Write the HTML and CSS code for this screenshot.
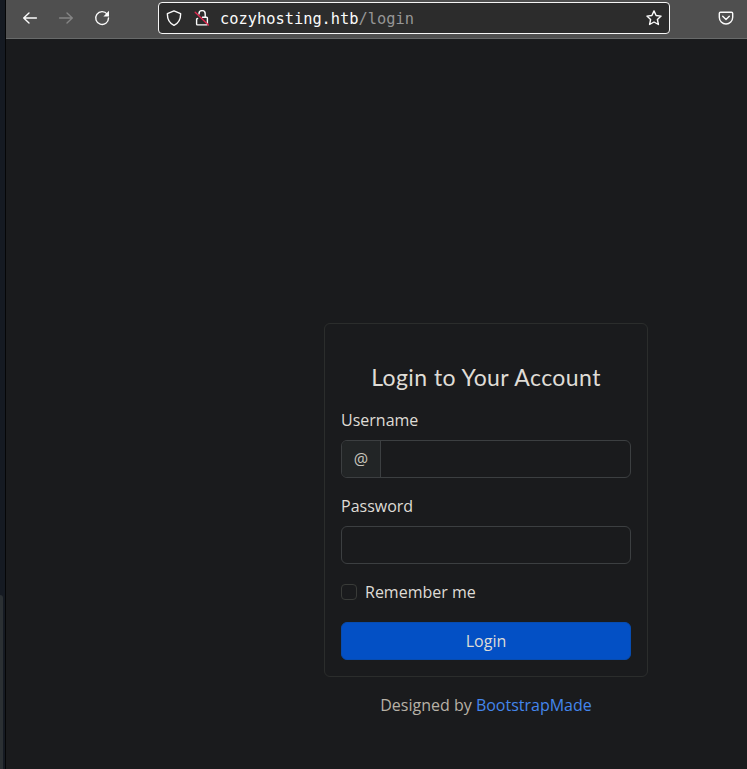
FILE: index.html
```html
<!DOCTYPE html>
<html lang="en">
<head>
<meta charset="utf-8">
<title>Login</title>
<link rel="stylesheet" href="styles.css">
</head>
<body>
<aside class="edge"><div class="edge-thumb"></div></aside>
<div class="browser">
  <header class="toolbar">
    <svg class="icon back" viewBox="0 0 16 16"><path d="M14.400 8H1.700M7 3 1.700 8 7 13"/></svg>
    <svg class="icon forward" viewBox="0 0 16 16"><path d="M1.600 8h12.700M9 3l5.300 5L9 13"/></svg>
    <svg class="icon reload" viewBox="0 0 16 16"><path d="M13.200 4.200A6.400 6.400 0 1 0 14.500 8"/><path class="solid" d="M15 .8v5.600H9.400z"/></svg>
    <div class="address">
      <svg class="icon shield" viewBox="0 0 16 16"><path d="M8 .9 14.600 3.600C14.800 9 12.700 13.200 8 15.400 3.300 13.200 1.200 9 1.400 3.600Z"/></svg>
      <svg class="icon lock" viewBox="0 0 16 16"><path d="M5 4V3.700a3.100 3.100 0 0 1 6.200 0v3.500M3.600 8.500q-1 0-1 .9v4.700q0 .8.800.8h9.200q.8 0 .8-.8V8q0-.8-.8-.8H8.500"/><path class="slash" d="M1.200 2.200 14.400 15"/></svg>
      <div class="url">cozyhosting.htb<span>/login</span></div>
      <svg class="icon star" viewBox="0 0 16 16"><path d="m8 .9 2.100 4.600 5 .6-3.700 3.400 1 5-4.400-2.500-4.400 2.500 1-5L.9 6.100l5-.6Z"/></svg>
    </div>
    <svg class="icon pocket" viewBox="0 0 16 16"><path d="M2.500 2.300h11q1.200 0 1.200 1.200V7.300a6.700 6.700 0 0 1-13.400 0V3.500q0-1.200 1.200-1.200Z"/><path d="M4.700 6.200 8 9.400l3.300-3.200"/></svg>
  </header>
  <main class="page">
    <form class="card">
      <h1>Login to Your Account</h1>
      <label for="user">Username</label>
      <div class="group"><span>@</span><input id="user" type="text"></div>
      <label for="pass">Password</label>
      <div class="group"><input id="pass" type="password"></div>
      <label class="remember"><input type="checkbox">Remember me</label>
      <button type="button">Login</button>
    </form>
    <p class="credits">Designed by <a>BootstrapMade</a></p>
  </main>
</div>
</body>
</html>
```
FILE: styles.css
```css
* { box-sizing: border-box; }
body {
  margin: 0;
  height: 769px;
  display: flex;
  overflow: hidden;
  background: #1a1b1d;
  color: #dfdcd6;
  font: 16px/24px "Open Sans", sans-serif;
}
.edge {
  width: 6px;
  flex: none;
  padding-top: 595px;
  background: #151a22;
  border-right: 1px solid #050607;
}
.edge-thumb { width: 3px; height: 174px; background: #2b3033; border-top-right-radius: 3px; }
.browser { flex: 1; min-width: 0; }
.toolbar {
  height: 39px;
  display: flex;
  align-items: center;
  padding: 0 13px 3px 16px;
  background: #4f4f4f;
  border-bottom: 1px solid #686a6a;
}
.icon {
  width: 16px;
  height: 16px;
  flex: none;
  fill: none;
  stroke: #fbfbfb;
  stroke-width: 1.4;
  stroke-linecap: round;
  stroke-linejoin: round;
}
.icon .solid { fill: #fbfbfb; stroke: none; }
.forward { margin-left: 20px; stroke: #858585; }
.reload { margin-left: 20px; }
.address {
  width: 512px;
  height: 32px;
  margin-left: 48px;
  padding: 0 7px;
  display: flex;
  align-items: center;
  background: #2c2c2c;
  border: 1px solid #f5f5f5;
  border-radius: 4px;
}
.lock { margin-left: 12px; }
.icon .slash { stroke: #e22850; }
.url {
  flex: 1;
  margin-left: 10px;
  padding-top: 2px;
  color: #fbfbfb;
  font: 15.35px/20px "DejaVu Sans Mono", monospace;
}
.url span { color: #969696; }
.pocket { margin-left: auto; }
.page { padding: 284px 0 0 318px; }
.card {
  width: 324px;
  height: 354px;
  padding: 39px 16px 16px;
  border: 1px solid #2b2d2c;
  border-radius: 6px;
}
h1 {
  margin: 0 0 17px;
  text-align: center;
  font: 400 23px/28px Lato, sans-serif;
  letter-spacing: 0.43px;
  white-space: nowrap;
}
label { display: block; margin-bottom: 8px; }
.group {
  height: 38px;
  display: flex;
  margin-bottom: 16px;
  border: 1px solid #3c3f41;
  border-radius: 6px;
  overflow: hidden;
}
.group span {
  width: 39px;
  padding-top: 6px;
  text-align: center;
  color: #c9c5bd;
  background: #222526;
  border-right: 1px solid #3c3f41;
}
.group input { flex: 1; min-width: 0; border: 0; background: transparent; }
.remember { display: flex; align-items: center; margin-bottom: 18px; }
.remember input {
  appearance: none;
  width: 16px;
  height: 16px;
  margin: 0 8px 0 0;
  border: 1px solid #393b38;
  border-radius: 4px;
}
button {
  width: 100%;
  height: 38px;
  padding: 0;
  border: 1px solid #074cb0;
  border-radius: 6px;
  background: #0350c5;
  color: #dfdcd6;
  font: inherit;
}
.credits { width: 324px; margin: 16px 0 0; text-align: center; color: #b7b1a6; }
.credits a { color: #4486ec; }
```
